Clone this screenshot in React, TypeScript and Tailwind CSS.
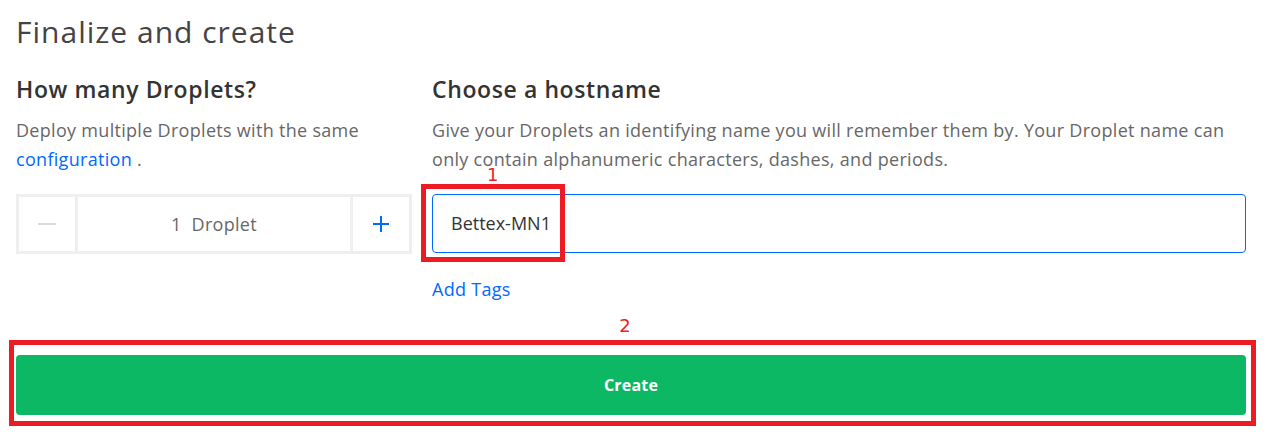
import React from "react";

export default function App() {
  return (
    <div className="w-[1264px] h-[433px] bg-white overflow-hidden" style={{ fontFamily: "'Open Sans', Lato, sans-serif" }}>
      <div className="pl-4 pr-[18px] pt-[12px]">
        <h1 className="text-[30px] leading-[40px] tracking-[1px] text-[#444444] font-normal">Finalize and create</h1>
        <div className="flex gap-5 mt-[22px]">
          <div className="w-[396px] shrink-0">
            <h2 className="text-[23px] leading-[30px] font-semibold tracking-[0.6px] text-[#333333]">How many Droplets?</h2>
            <p className="mt-[12px] text-[18px] leading-[29px] tracking-[0.3px] text-[#676767]">
              Deploy multiple Droplets with the same <span className="text-[#0069ff]">configuration</span> .
            </p>
            <div className="mt-[20px] h-[60px] bg-[#efefef] p-[3px] flex gap-[3px]">
              <div className="w-[56px] bg-white flex items-center justify-center">
                <div className="w-[18px] h-[2px] bg-[#d9d9d9]" />
              </div>
              <div className="flex-1 bg-white flex items-center justify-center text-[18px] tracking-[0.3px] text-[#676767]">
                1&nbsp; Droplet
              </div>
              <div className="w-[56px] bg-white flex items-center justify-center">
                <svg width="20" height="20" viewBox="0 0 20 20">
                  <path d="M10 2v16M2 10h16" stroke="#0069ff" strokeWidth="2" />
                </svg>
              </div>
            </div>
          </div>
          <div className="flex-1">
            <h2 className="text-[23px] leading-[30px] font-semibold tracking-[0.6px] text-[#333333]">Choose a hostname</h2>
            <p className="mt-[12px] text-[18px] leading-[29px] tracking-[0.3px] text-[#676767]">
              Give your Droplets an identifying name you will remember them by. Your Droplet name can only contain alphanumeric characters, dashes, and periods.
            </p>
            <div className="relative mt-[20px]">
              <div className="h-[59px] border border-[#0069ff] rounded-[4px] flex items-center pl-[18px] text-[18px] text-[#333333]">
                Bettex-MN1
              </div>
              <div className="absolute left-[-11px] top-[-10px] w-[144px] h-[78px] border-[5px] border-[#ed1c24]" />
              <div className="absolute left-[55px] top-[-29px] text-[#ed1c24] text-[18px] leading-[20px]" style={{ fontFamily: "'DejaVu Sans', sans-serif" }}>1</div>
            </div>
            <div className="mt-[24px] text-[18px] leading-[24px] tracking-[0.3px] text-[#0069ff]">Add Tags</div>
          </div>
        </div>
        <div className="mt-[14px] pr-[12px] text-[#ed1c24] text-[18px] leading-[22px] text-center" style={{ fontFamily: "'DejaVu Sans', sans-serif" }}>
          2
        </div>
        <div className="relative mt-[18px]">
          <div className="h-[60px] bg-[#0cb863] rounded-[4px] flex items-center justify-center text-white text-[16px] tracking-[0.2px] font-bold">
            Create
          </div>
          <div className="absolute left-[-7px] top-[-15px] right-[-10px] bottom-[-11px] border-[5px] border-[#ed1c24]" />
        </div>
      </div>
    </div>
  );
}
